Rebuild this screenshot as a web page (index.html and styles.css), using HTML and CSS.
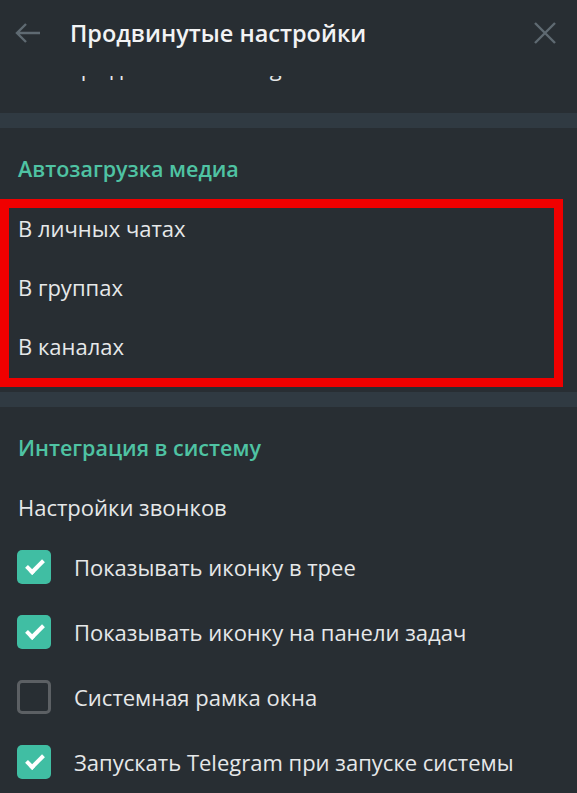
FILE: index.html
```html
<html><head>
  <title>Продвинутые настройки</title>
  <meta charset="utf-8">
  <link rel="stylesheet" href="styles.css">
</head>
<body>
  <div class="box">
    <header class="box-header">
      <svg class="icon-back" width="28" height="22" viewBox="0 0 28 22">
        <path d="M26 11H3M12 2L3 11l9 9" fill="none" stroke="#5f6a72" stroke-width="2.4"/>
      </svg>
      <h1>Продвинутые настройки</h1>
      <svg class="icon-close" width="24" height="24" viewBox="0 0 24 24">
        <path d="M2 2l20 20M22 2L2 22" fill="none" stroke="#5f6a72" stroke-width="2.4"/>
      </svg>
    </header>

    <div class="scroll">
      <div class="scroll-inner">
        <section class="section first">
          <div class="row">Экспорт данных из Telegram</div>
        </section>

        <div class="divider"></div>

        <section class="section">
          <div class="section-title">Автозагрузка медиа</div>
          <div class="highlight">
            <div class="row">В личных чатах</div>
            <div class="row">В группах</div>
            <div class="row">В каналах</div>
          </div>
        </section>

        <div class="divider"></div>

        <section class="section">
          <div class="section-title">Интеграция в систему</div>
          <div class="row">Настройки звонков</div>
          <label class="check-row">
            <span class="check on"></span>
            <span>Показывать иконку в трее</span>
          </label>
          <label class="check-row">
            <span class="check on"></span>
            <span>Показывать иконку на панели задач</span>
          </label>
          <label class="check-row">
            <span class="check"></span>
            <span>Системная рамка окна</span>
          </label>
          <label class="check-row">
            <span class="check on"></span>
            <span>Запускать Telegram при запуске системы</span>
          </label>
        </section>
      </div>
    </div>
  </div>
</body></html>
```

FILE: styles.css
```css
/* Telegram night theme settings box */
body {
  margin: 0;
  background: #282e33;
  font-family: "Open Sans", "Noto Sans", sans-serif;
  color: #e6e8e9;
}

.box {
  width: 577px;
  height: 793px;
  display: flex;
  flex-direction: column;
  overflow: hidden;
}

.box-header {
  height: 76px;
  flex: 0 0 76px;
  display: flex;
  align-items: center;
  padding: 0 20px 10px 14px;
  box-sizing: border-box;
  background: #282e33;
  position: relative;
  z-index: 1;
}

.box-header h1 {
  flex: 1;
  margin: 0 0 0 28px;
  font-size: 23.5px;
  font-weight: 600;
  color: #f2f3f4;
}

.icon-back,
.icon-close {
  display: block;
}

.scroll {
  flex: 1;
  overflow: hidden;
}

.scroll-inner {
  margin-top: -38px;
}

.section {
  padding: 11px 0 16px;
}

.section.first {
  padding-top: 0;
  padding-bottom: 16px;
}

.divider {
  height: 15px;
  background: #303a42;
}

.section-title {
  height: 60px;
  line-height: 60px;
  padding-left: 18px;
  font-size: 21.5px;
  font-weight: 600;
  color: #4fc3a3;
}

.row {
  height: 59px;
  line-height: 59px;
  padding-left: 18px;
  font-size: 22px;
}

.highlight {
  position: relative;
}

.highlight::after {
  content: "";
  position: absolute;
  left: 0;
  right: 14px;
  top: 0;
  bottom: -11px;
  border: 9px solid #f00000;
}

.check-row {
  display: flex;
  align-items: center;
  height: 65px;
  padding: 0 0 6px 17px;
  box-sizing: border-box;
  gap: 23px;
  font-size: 22px;
}

.check {
  width: 34px;
  height: 34px;
  flex: 0 0 34px;
  box-sizing: border-box;
  border: 3px solid #5c6064;
  border-radius: 5px;
  position: relative;
}

.check.on {
  border: none;
  background: #40bea3;
}

.check.on::after {
  content: "";
  position: absolute;
  left: 9px;
  top: 10px;
  width: 14px;
  height: 6px;
  border-left: 4px solid #fff;
  border-bottom: 4px solid #fff;
  transform: rotate(-45deg);
}
```
